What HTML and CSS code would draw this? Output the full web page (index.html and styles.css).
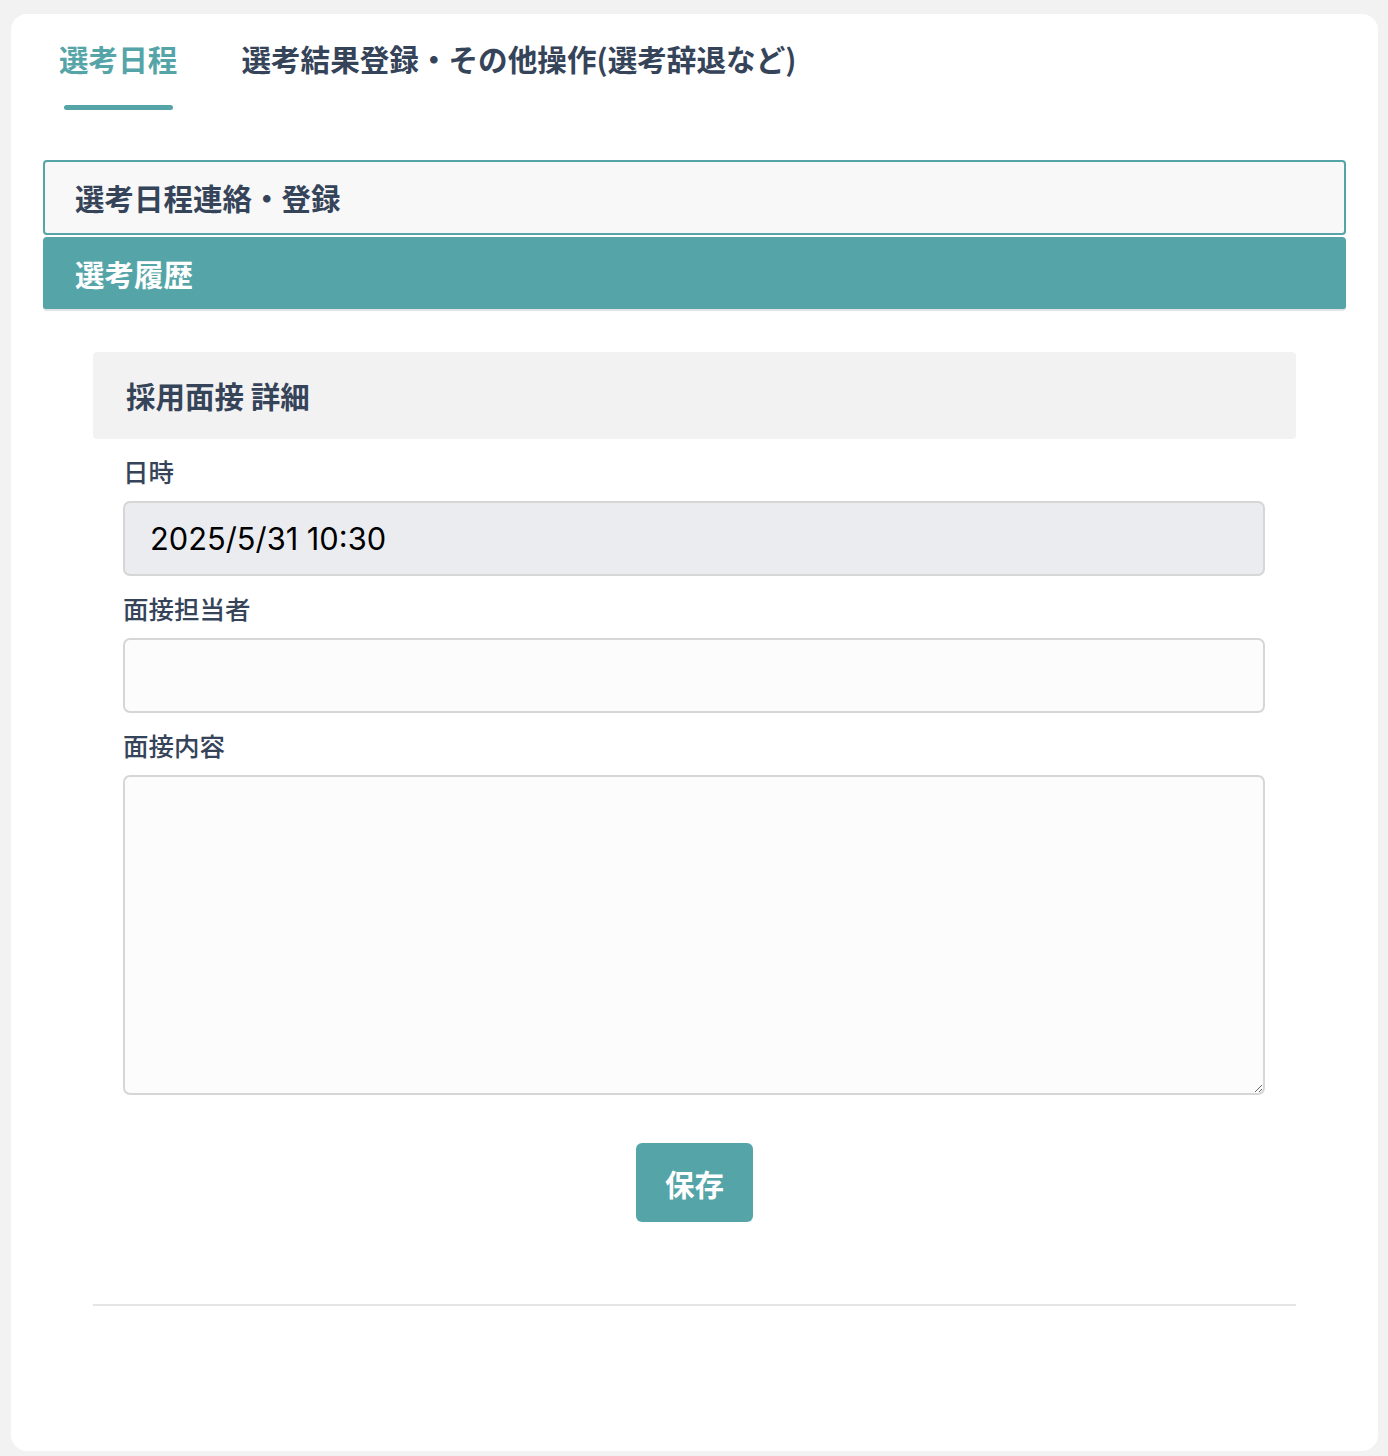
FILE: index.html
```html
<!doctype html>
<html lang="ja">
<head>
  <meta charset="utf-8">
  <meta name="viewport" content="width=device-width, initial-scale=1">
  <title>選考日程</title>
  <link rel="stylesheet" href="styles.css">
</head>
<body>
  <div class="card">
    <nav class="tabs">
      <div class="tab active">選考日程</div>
      <div class="tab">選考結果登録・その他操作(選考辞退など)</div>
    </nav>

    <div class="accordion">
      <div class="acc-item">選考日程連絡・登録</div>
      <div class="acc-item open">選考履歴</div>
    </div>

    <section class="detail">
      <h3 class="detail-head">採用面接 詳細</h3>
      <div class="fields">
        <label class="label">日時</label>
        <input class="input readonly" type="text" value="2025/5/31 10:30" readonly>

        <label class="label">面接担当者</label>
        <input class="input" type="text">

        <label class="label">面接内容</label>
        <textarea class="input textarea"></textarea>
      </div>
      <div class="actions">
        <button class="btn">保存</button>
      </div>
      <hr class="divider">
    </section>
  </div>
</body>
</html>
```

FILE: styles.css
```css
:root {
  --teal: #55a5a8;
  --ink: #36445a;
  --font-face: "Noto Sans CJK JP", "Noto Sans", sans-serif;
}

body {
  margin: 0;
  padding: 14px 10px 5px 11px;
  background-color: #f2f2f2;
  font-family: var(--font-face);
  color: var(--ink);
}

.card {
  background: #fff;
  border-radius: 16px;
  height: 1437px;
  padding: 0 32px;
  box-sizing: border-box;
}

/* tabs */
.tabs {
  display: flex;
  gap: 64px;
  padding: 22px 0 0 16px;
}

.tab {
  font-size: 29.6px;
  font-weight: 700;
  line-height: 46px;
  height: 74px;
  position: relative;
}

.tab.active {
  color: var(--teal);
}

.tab.active::after {
  content: "";
  position: absolute;
  left: 5px;
  width: 109px;
  bottom: 0;
  height: 5px;
  border-radius: 3px;
  background: var(--teal);
}

/* accordion */
.accordion {
  margin-top: 50px;
}

.acc-item {
  font-size: 29.5px;
  font-weight: 700;
  height: 71px;
  line-height: 71px;
  padding: 0 30px;
  border: 2px solid var(--teal);
  border-radius: 4px;
  background: #f8f8f8;
}

.acc-item.open {
  margin-top: 2px;
  height: 72px;
  line-height: 72px;
  padding: 0 32px;
  border: 0;
  border-bottom: 2px solid #e3e3e3;
  background: var(--teal);
  color: #fff;
}

/* detail */
.detail {
  margin: 41px 50px 0;
}

.detail-head {
  margin: 0;
  height: 87px;
  line-height: 87px;
  padding: 0 33px;
  background: #f2f2f2;
  border-radius: 4px;
  font-size: 29.5px;
  font-weight: 700;
}

.fields {
  display: flex;
  flex-direction: column;
  padding: 0 31px 0 30px;
}

.label {
  margin-top: 14px;
  line-height: 36px;
  font-size: 25.5px;
  font-weight: 500;
}

.input {
  margin-top: 12px;
  height: 75px;
  box-sizing: border-box;
  border: 2px solid #d6d6d6;
  border-radius: 7px;
  background: #fcfcfd;
  padding: 0 25px;
  font-family: Inter, "Noto Sans CJK JP", sans-serif;
  font-size: 30.8px;
  color: #000;
  outline: none;
}

.input.readonly {
  background: #ebecf0;
}

.textarea {
  height: 320px;
  resize: vertical;
  padding: 16px 25px;
}

.actions {
  display: flex;
  justify-content: center;
  margin-top: 48px;
}

.btn {
  width: 117px;
  height: 79px;
  border: 0;
  border-radius: 6px;
  background: var(--teal);
  color: #fff;
  font-family: var(--font-face);
  font-size: 29.5px;
  font-weight: 700;
}

.divider {
  margin: 82px 0 0;
  border: 0;
  border-top: 2px solid #e5e5e5;
}
```
